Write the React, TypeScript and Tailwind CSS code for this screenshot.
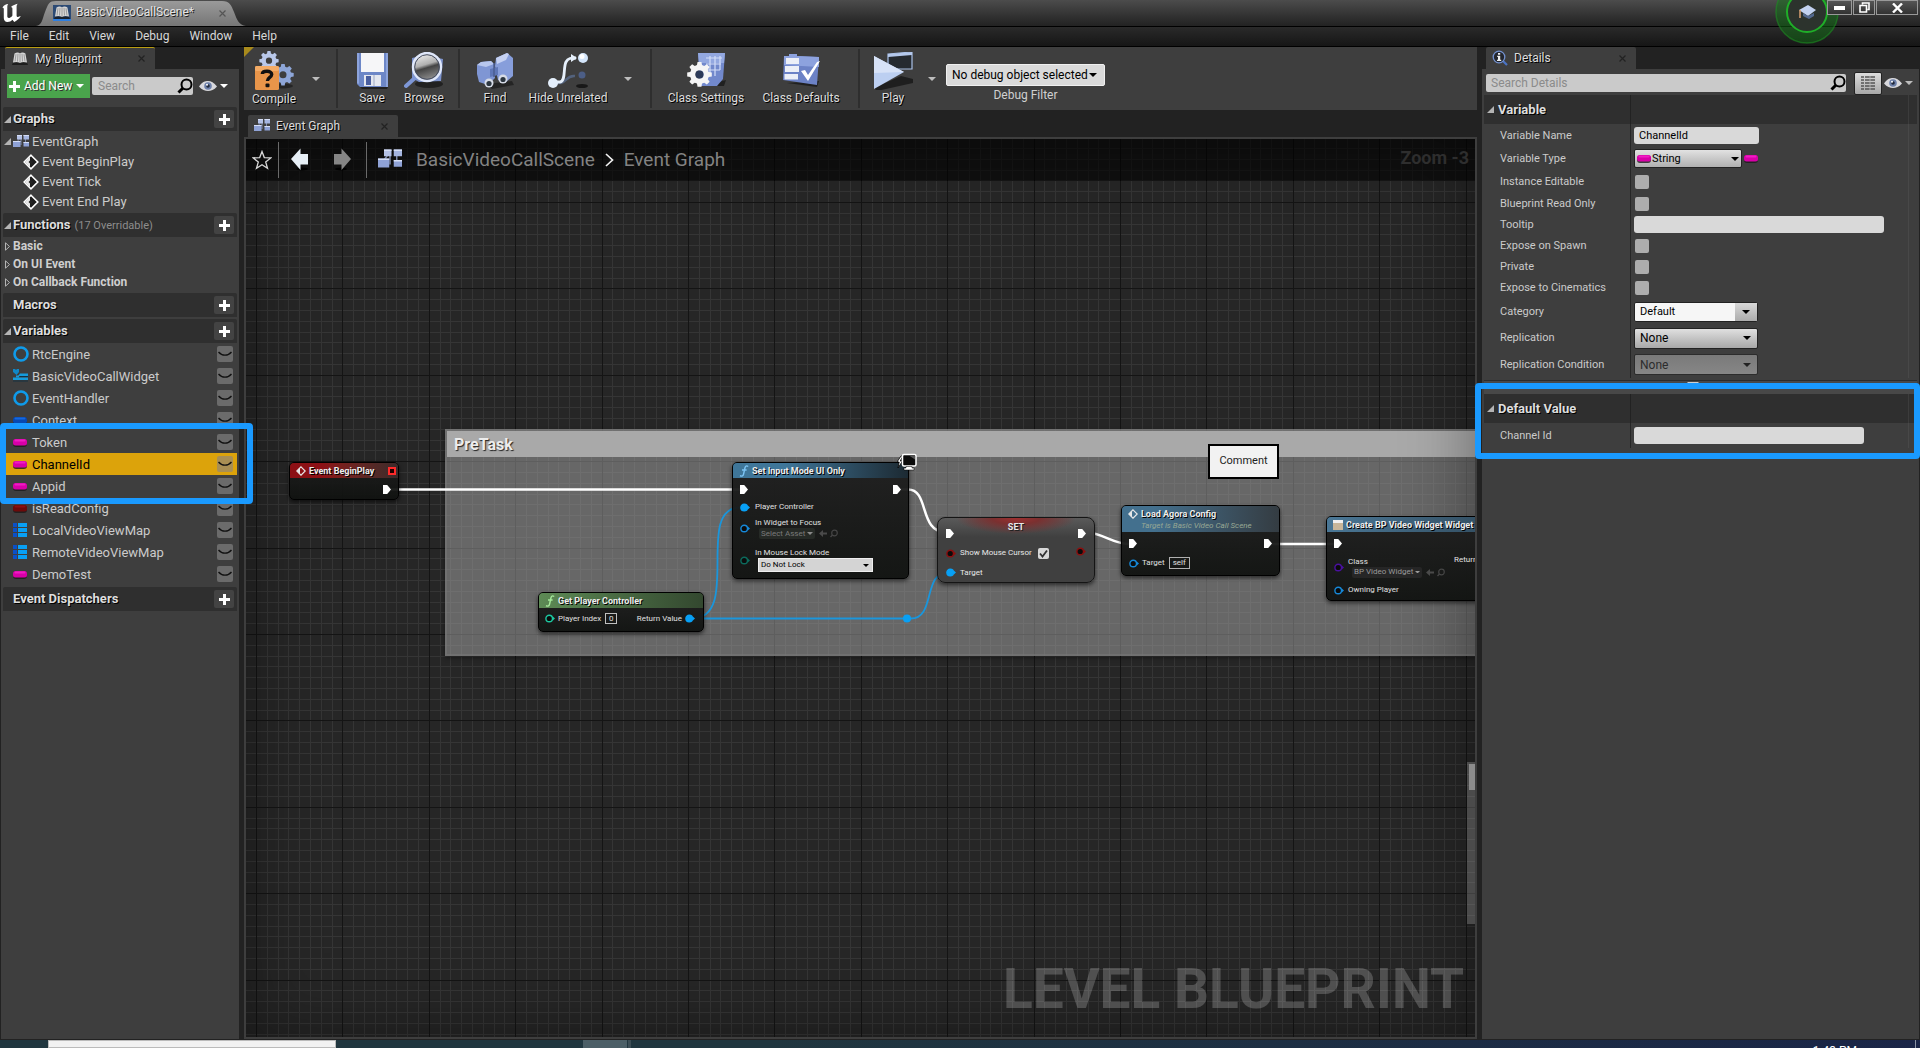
import React from "react";

type Children = { children?: React.ReactNode };

/* ---------- icons ---------- */

const UnrealLogo = () => (
  <svg width="20" height="20" viewBox="0 0 20 19" className="shrink-0" aria-hidden="true">
    <path
      fill="#fff"
      d="M.4 4.2C1.8 1.9 3.8.7 6.2.6 5.6 1.4 5.3 2.1 5.3 3.1v9.6c0 1.500 1.200 2 2.500 1.500 1.300-.5 2.200-1.300 2.600-2.200V5.200c0-1.100-.5-1.700-1.500-1.800C10.900 1.700 13.300 1 15.700.2c-.8.9-1.100 1.800-1.100 2.900v8.800c0 1.600 1.200 2 4.200.7-1.200 2.400-3.700 4.500-6.500 5.800l-1.900-2.200c-1.300 1.500-2.900 2.200-4.900 2.200-2.500 0-3.700-1.500-3.700-3.900V5.600C1.800 4.600 1.300 4.300.4 4.200z"
    />
  </svg>
);

const BookIcon = ({ blue = false }: { blue?: boolean }) => (
  <svg width="18" height="16" viewBox="0 0 18 16" className="shrink-0" aria-hidden="true">
    {blue && <rect width="18" height="16" fill="#2c4a74" />}
    {blue && <rect y="14" width="18" height="2" fill="#2f7fe0" />}
    <path d="M2 11.500 16 11.500 17 14 1 14z" fill="#111" opacity=".7" />
    <path d="M3.500 2.500C5.500 1.200 7.500 1.200 9 2.200c1.500-1 3.800-1 5.400.3L16 11.600c-2.400-.9-5-.9-7 .4-2-1.300-4.700-1.300-7-.4z" fill="#d7d7d7" />
    <path d="M5 3.200 4 10.500M7 2.800 6.500 10.500M9 2.500V12M11 2.800l.5 7.700M13 3.200l1 7.300" stroke="#8c8c8c" strokeWidth=".8" fill="none" />
  </svg>
);

const GraphIcon = ({ size = 16 }: { size?: number }) => (
  <svg width={size} height={size} viewBox="0 0 16 16" className="shrink-0" aria-hidden="true">
    <path d="M8 5v6M12.500 5v6M4 8l3-4" stroke="#7c88a8" strokeWidth="1" />
    <rect x="4" y="1" width="5" height="4.500" fill="#b4c1e6" />
    <rect x="10.500" y="1" width="5.500" height="4.500" fill="#a5b5e0" />
    <rect x="0" y="7" width="7.500" height="6" fill="#8fa2d6" />
    <rect x="10.500" y="8" width="5.500" height="4.500" fill="#8fa2d6" />
    <path d="M4 1h5v1H4zM10.500 1H16v1h-5.500zM0 7h7.500v1H0zM10.500 8H16v1h-5.500z" fill="#d5def6" />
  </svg>
);

const EventIcon = ({ size = 16 }: { size?: number }) => (
  <svg width={size} height={size} viewBox="0 0 16 16" className="shrink-0" aria-hidden="true">
    <path d="M8 1.200 14.800 8 8 14.800 1.200 8z" fill="#1c1c1c" stroke="#fff" strokeWidth="1.600" />
    <path d="M2 8 7 3v10z" fill="#e8e8e8" />
    <path d="M8 5.500 10.500 8 8 10.500 5.500 8z" fill="#222" />
  </svg>
);

const NodeEventIcon = () => (
  <svg width="10" height="10" viewBox="0 0 10 10" className="shrink-0" aria-hidden="true">
    <path d="M5 .8 9.200 5 5 9.200.8 5z" fill="none" stroke="#e8e8e8" strokeWidth="1.200" />
    <path d="M1.200 5 4 2.200v5.600z" fill="#e8e8e8" />
  </svg>
);

const Plus = ({ size = 11 }: { size?: number }) => (
  <svg width={size} height={size} viewBox="0 0 11 11" className="shrink-0" aria-hidden="true">
    <path d="M4 0h3v4h4v3H7v4H4V7H0V4h4z" fill="#fff" />
  </svg>
);

const Caret = ({ color = "#ddd", w = 8 }: { color?: string; w?: number }) => (
  <svg width={w} height={w / 2} viewBox="0 0 8 4" className="shrink-0" aria-hidden="true">
    <path d="M0 0h8L4 4z" fill={color} />
  </svg>
);

const CloseX = ({ color = "#222" }: { color?: string }) => (
  <svg width="7" height="7" viewBox="0 0 7 7" className="shrink-0" aria-hidden="true">
    <path d="M.5.5l6 6M6.500.5l-6 6" stroke={color} strokeWidth="1.200" />
  </svg>
);

const Expanded = () => (
  <svg width="7" height="7" viewBox="0 0 7 7" className="shrink-0" aria-hidden="true">
    <path d="M7 0v7H0z" fill="#b4b4b4" />
  </svg>
);

const Collapsed = () => (
  <svg width="5" height="9" viewBox="0 0 5 9" className="shrink-0" aria-hidden="true">
    <path d="M.5.800v7.400L4.500 4.500z" fill="none" stroke="#b4b4b4" strokeWidth="1" />
  </svg>
);

const Magnifier = () => (
  <svg width="16" height="16" viewBox="0 0 16 16" className="shrink-0" aria-hidden="true">
    <circle cx="9.500" cy="6.500" r="5" fill="none" stroke="#000" strokeWidth="2" />
    <path d="M6 10 1.500 14.500" stroke="#000" strokeWidth="3" />
  </svg>
);

const Eye = () => (
  <svg width="18" height="12" viewBox="0 0 18 12" className="shrink-0" aria-hidden="true">
    <path d="M0 6.500C3 2 6 1 9 1s6 1.500 9 5.500C15 10 12 11 9 11S3 10 0 6.500z" fill="#d8d8dc" />
    <circle cx="9" cy="6" r="3.800" fill="#6d80aa" />
    <circle cx="9" cy="6" r="1.800" fill="#20283c" />
    <circle cx="8" cy="4.800" r="1" fill="#fff" />
  </svg>
);

const Pill = ({ color, hi }: { color: string; hi: string }) => (
  <svg width="14" height="9" viewBox="0 0 14 9" className="shrink-0" aria-hidden="true">
    <rect x="0" y="2" width="14" height="7" rx="3" fill="#1c1c1c" opacity=".8" />
    <rect x="0" y="1" width="14" height="6.500" rx="2.500" fill={color} />
    <rect x="1.500" y="1.500" width="11" height="2" rx="1" fill={hi} />
  </svg>
);

const Ring = () => (
  <svg width="16" height="16" viewBox="0 0 16 16" className="shrink-0" aria-hidden="true">
    <circle cx="8" cy="8" r="6.500" fill="none" stroke="#0f9bea" strokeWidth="2.600" />
  </svg>
);

const WidgetIcon = () => (
  <svg width="16" height="14" viewBox="0 0 16 14" className="shrink-0" aria-hidden="true">
    <path d="M0 0h2l1 1 1-1h2v3L3.500 6 0 3z" fill="#1088c8" />
    <path d="M7 4.500h8v2.500H5zM0 8.500h15V11H0z" fill="#159bdc" />
    <path d="M3 6.500h3v2H3z" fill="#159bdc" />
    <path d="M7 7.500h8M0 12h15" stroke="#143040" strokeWidth="1" />
  </svg>
);

const MapIcon = () => (
  <svg width="14" height="14" viewBox="0 0 14 14" className="shrink-0" aria-hidden="true">
    <path d="M0 0h4v4H0zM0 5h4v4H0zM0 10h4v4H0z" fill="#0a50c8" />
    <path d="M5 0h9v4H5zM5 5h9v4H5zM5 10h9v4H5z" fill="#08a0f5" />
  </svg>
);

const DetailsIcon = () => (
  <svg width="16" height="16" viewBox="0 0 16 16" className="shrink-0" aria-hidden="true">
    <path d="M10.500 10.500 15 15" stroke="#4a73c4" strokeWidth="2.200" />
    <circle cx="7" cy="7" r="5.800" fill="#23262e" stroke="#7391cf" strokeWidth="1.300" />
    <path d="M6 3h2.200v1.800H6zM5.200 5.800h3v4h1V11H5V9.800h1V7h-.8z" fill="#f0f0f0" />
  </svg>
);

const gearPath =
  "M8.300 0h3.400l.5 2.700 1.900.8L16.400 2l2.400 2.400-1.600 2.300.8 1.900 2.700.5v3.400l-2.700.5-.8 1.900 1.600 2.300-2.400 2.400-2.300-1.600-1.900.8-.5 2.700H8.300l-.5-2.700-1.900-.8-2.300 1.600-2.400-2.400 1.600-2.300-.8-1.900L-.7 12.500V9.100L2 8.600l.8-1.900L1.200 4.400 3.600 2l2.300 1.500 1.900-.8zM10 7.300a3.500 3.500 0 1 0 0 7 3.500 3.500 0 0 0 0-7z";

const CompileIcon = () => (
  <svg width="40" height="40" viewBox="0 0 40 40" aria-hidden="true">
    <ellipse cx="28" cy="35" rx="11" ry="2.500" fill="#161616" opacity=".6" />
    <g transform="translate(6 0)"><path d={gearPath} fill="#b9c8ea" fillRule="evenodd" transform="scale(.9)" /></g>
    <g transform="translate(19 13)"><path d={gearPath} fill="#8ea6d8" fillRule="evenodd" /></g>
    <rect x="1" y="15" width="24" height="24" rx="1.500" fill="#e8954a" />
    <rect x="1" y="15" width="24" height="5" rx="1.500" fill="#f3ab66" />
    <path d="M8.300 23c.2-3.600 9.700-3.800 9.400.5-.1 2.800-4.300 3-4.300 6.500" fill="none" stroke="#111" strokeWidth="3.400" />
    <rect x="11.500" y="32.500" width="4" height="3.800" rx="1" fill="#111" />
  </svg>
);

const SaveIcon = () => (
  <svg width="36" height="38" viewBox="-2 0 36 38" aria-hidden="true">
    <path d="M4 35h28l3-6-4 8H6z" fill="#141414" opacity=".7" />
    <path d="M1 1h31v34H4l-3-3z" fill="#6d87c7" />
    <path d="M1 1h2v31l-2-1zM30 1h2v34h-2z" fill="#8da4dc" />
    <rect x="5" y="1" width="23" height="19" fill="#f6f6f8" />
    <rect x="8" y="23" width="17" height="11" fill="#e4e7ef" />
    <rect x="10" y="24" width="5" height="9" fill="#4a5fa0" />
    <rect x="17" y="23" width="2" height="11" fill="#c1c8da" />
  </svg>
);

const BrowseIcon = () => (
  <svg width="40" height="38" viewBox="0 0 40 38" aria-hidden="true">
    <defs>
      <linearGradient id="lens" x2=".3" y2="1">
        <stop offset="0" stopColor="#fff" />
        <stop offset=".5" stopColor="#b0b0b0" />
        <stop offset=".62" stopColor="#444" />
        <stop offset="1" stopColor="#888" />
      </linearGradient>
    </defs>
    <ellipse cx="25" cy="32" rx="14" ry="4" fill="#151515" opacity=".7" />
    <path d="M8 6 20 3l19 4-2 22-22 1L8 26z" fill="#7c92cb" />
    <path d="M12 25 2 34" stroke="#7e97d6" strokeWidth="4" strokeLinecap="round" />
    <circle cx="23" cy="15" r="14" fill="url(#lens)" stroke="#dfe7fa" strokeWidth="2.400" />
    <circle cx="23" cy="15" r="12.300" fill="none" stroke="#444c60" strokeWidth="1" />
  </svg>
);

const FindIcon = () => (
  <svg width="38" height="36" viewBox="0 0 38 36" aria-hidden="true">
    <path d="M10 31l26-3 2 4-22 4z" fill="#141414" opacity=".6" />
    <path d="M1 12 5 9l10-1 3 3 1 14-7 7-9-3-2-8z" fill="#7f96d4" />
    <path d="M20 5 31 0l6 5v18l-7 6-8-2-3-14z" fill="#879edb" />
    <path d="M1 12 5 9l10-1 3 3-8 3z" fill="#b8c7ee" />
    <path d="M20 5 31 0l2 1-3 6-9 4z" fill="#c5d1f2" />
    <path d="M14 16l8-2v8l-8 2z" fill="#5f77b8" />
    <path d="M18 10v14" stroke="#4a5c90" strokeWidth="1.500" />
    <circle cx="13" cy="30" r="4.500" fill="#d6dbe6" />
    <circle cx="13" cy="30.500" r="2.600" fill="#2c3640" />
    <circle cx="27" cy="26" r="4.500" fill="#d6dbe6" />
    <circle cx="27" cy="26.500" r="2.600" fill="#2c3640" />
  </svg>
);

const HideIcon = () => (
  <svg width="40" height="38" viewBox="0 0 40 38" aria-hidden="true">
    <ellipse cx="34" cy="34" rx="6" ry="2" fill="#181818" />
    <path d="M7 31h6c5-1 6-8 14-7" fill="none" stroke="#53627c" strokeWidth="2.500" />
    <circle cx="34" cy="23" r="3.500" fill="#4c5e86" />
    <path d="M6 30h6c6-1 3-14 6-20 2-4 5-4 10-4" fill="none" stroke="#e6f0fb" strokeWidth="2.800" />
    <path d="M23 2v8l6-4z" fill="#e6f0fb" />
    <circle cx="5" cy="31" r="5" fill="#e4effc" />
    <circle cx="35" cy="6" r="5" fill="#d4e6fb" />
    <circle cx="34" cy="4.500" r="2.500" fill="#fff" />
  </svg>
);

const ClassSettingsIcon = () => (
  <svg width="40" height="38" viewBox="0 0 40 38" aria-hidden="true">
    <path d="M18 34h20l2-6z" fill="#141414" opacity=".7" />
    <path d="M12 1h27l-2 26-6 7H14z" fill="#7289cc" />
    <path d="M12 1h27l-1 10H13z" fill="#93a8e0" />
    <path d="M20 6h16M20 12h15M20 18h14M24 4v20M29 4v20M34 4v14" stroke="#d3def8" strokeWidth="1.200" />
    <g transform="translate(2 10)">
      <path d={gearPath} fill="#f5f5f5" fillRule="evenodd" transform="scale(1.150)" />
      <circle cx="11.500" cy="12.400" r="4" fill="#2c3a58" />
    </g>
  </svg>
);

const ClassDefaultsIcon = () => (
  <svg width="40" height="36" viewBox="0 0 40 36" aria-hidden="true">
    <path d="M6 30 38 28l-2 6z" fill="#141414" opacity=".7" />
    <path d="M8 3V1h8v2l22 1-2 28L2 27 3 3z" fill="#6c82c6" />
    <path d="M8 3V1h8v2l22 1v10L3 12V3z" fill="#8da2de" />
    <path d="M5 5h13v6H5zM4 13h14v6H4zM3.500 21H17v5.500H3.500z" fill="#eceff7" />
    <path d="M20 18l4-1 3 5 9-13 3-1-12 20z" fill="#fff" />
  </svg>
);

const PlayIcon = () => (
  <svg width="40" height="38" viewBox="0 0 40 38" aria-hidden="true">
    <path d="M1 36 28 24l12 3v4L4 39z" fill="#161616" opacity=".8" />
    <path d="M15 2 39 0v17l-24 0z" fill="#252a30" stroke="#a9c0e6" strokeWidth="1.200" />
    <path d="M15 2 39 0v3l-24 2z" fill="#b4c8ec" />
    <path d="M1 4 31 20 1 37z" fill="#bccff1" />
    <path d="M1 4 31 20 1 21z" fill="#d7e2f7" />
  </svg>
);

const FunctionGlyph = ({ color }: { color: string }) => (
  <svg width="10" height="12" viewBox="0 0 10 12" className="shrink-0" aria-hidden="true">
    <path d="M9.200 1.500C7.500.3 6.300 1 5.900 3L4.600 9c-.4 2-1.600 2.700-3.600 1.700M3 5h4.600" fill="none" stroke={color} strokeWidth="1.400" />
  </svg>
);

const ExecPin = () => (
  <svg width="8" height="9" viewBox="0 0 8 9" className="shrink-0" aria-hidden="true">
    <path d="M0 0h4.200L8 4.500 4.200 9H0z" fill="#fff" />
  </svg>
);

const DataPin = ({ color, filled = false }: { color: string; filled?: boolean }) => (
  <svg width="10" height="9" viewBox="0 0 10 9" className="shrink-0" aria-hidden="true">
    <circle cx="4.200" cy="4.500" r="3.300" fill={filled ? color : "#0b0b0b"} stroke={color} strokeWidth="1.400" />
    <path d="M7.800 2.500 10 4.500 7.800 6.500z" fill={color} />
  </svg>
);

const AssetTools = () => (
  <svg width="20" height="9" viewBox="0 0 20 9" className="shrink-0" aria-hidden="true">
    <path d="M0 4.500 4 1v2.500h4v2H4V8z" fill="#4a4a4a" />
    <circle cx="15.500" cy="4" r="2.800" fill="none" stroke="#454545" strokeWidth="1.200" />
    <path d="M13.500 6 11.500 8" stroke="#454545" strokeWidth="1.500" />
  </svg>
);

/* ---------- shared pieces ---------- */

const SectionHeader = ({ title, note, arrow = true }: { title: string; note?: string; arrow?: boolean }) => (
  <div className="mx-0.5 flex h-6 items-center rounded-t-xs bg-[#2f2f2f] pr-[3px] pl-px">
    <span className="flex w-[9px]">{arrow && <Expanded />}</span>
    <h2 className="text-[13px] font-bold text-[#dedede] [text-shadow:1px_1px_0_#000]">{title}</h2>
    {note && <span className="ml-1 pt-0.5 text-[11px] text-[#8d8d8d]">{note}</span>}
    <button type="button" aria-label={"Add to " + title} className="ml-auto flex h-[18px] w-5 items-center justify-center rounded-xs bg-[#434343]">
      <Plus />
    </button>
  </div>
);

const VarRow = ({ name, icon, selected = false }: { name: string; icon: React.ReactNode; selected?: boolean }) => (
  <li className={selected ? "mx-0.5 flex h-[22px] items-center bg-[#dca30b] pr-1 text-black" : "mx-0.5 flex h-[22px] items-center pr-1 text-[#cbcbcb]"}>
    <span className="ml-2.5 flex w-[19px] items-center">{icon}</span>
    <span className="pt-0.5 text-[13px]">{name}</span>
    <button
      type="button"
      aria-label={"Toggle visibility of " + name}
      className={selected ? "ml-auto flex size-4 items-center justify-center rounded-xs bg-[#a98f54]" : "ml-auto flex size-4 items-center justify-center rounded-xs bg-[#6b6b6b]"}
    >
      <svg width="14" height="6" viewBox="0 0 14 6" aria-hidden="true">
        <path d="M.5 1C4 5.200 10 5.200 13.500 1" fill="none" stroke="#111" strokeWidth="1.400" />
      </svg>
    </button>
  </li>
);

const pink = <Pill color="#d800a8" hi="#f01cc4" />;

const DockTab = ({ icon, title, accent = false }: { icon: React.ReactNode; title: string; accent?: boolean }) => (
  <div className={accent ? "flex h-full w-[150px] items-center rounded-t-xs border-t border-[#b99d12] bg-[#3e3e3e] px-1.5" : "flex h-full w-[150px] items-center rounded-t-xs bg-[#3e3e3e] px-1.5"}>
    {icon}
    <span className="ml-1.5 text-xs text-[#dcdcdc] [text-shadow:1px_1px_0_#000]">{title}</span>
    <button type="button" aria-label={"Close " + title} className="mr-0.5 ml-auto p-0.5">
      <CloseX />
    </button>
  </div>
);

/* ---------- left panel ---------- */

const MyBlueprint = () => (
  <aside className="z-20 ml-px flex w-[238px] shrink-0 flex-col">
    <div className="flex h-[22px] pl-1">
      <DockTab icon={<BookIcon />} title="My Blueprint" accent />
    </div>
    <div className="flex-1 bg-[#3e3e3e]">
      <div className="flex h-[38px] items-center gap-0.5 pr-2 pb-1 pl-1.5">
        <button type="button" className="flex h-6 w-[83px] items-center gap-1 bg-[#4aa44c] px-0.5 text-xs whitespace-nowrap text-white [text-shadow:1px_1px_0_#333]">
          <Plus />
          Add New
          <Caret color="#fff" />
        </button>
        <div className="flex h-[18px] w-[101px] items-center rounded-xs bg-[#cacaca] pl-1.5">
          <input type="text" aria-label="Search blueprint" placeholder="Search" className="w-full min-w-0 bg-transparent text-xs text-black placeholder-[#8b8b8b] outline-none" />
          <Magnifier />
        </div>
        <button type="button" aria-label="View options" className="ml-1 flex items-center gap-[3px]">
          <Eye />
          <Caret color="#fff" />
        </button>
      </div>

      <SectionHeader title="Graphs" />
      <ul className="text-[13px] text-[#cbcbcb]">
        <li className="flex h-[21px] items-center pl-[3px]">
          <Expanded />
          <span className="mr-[3px] ml-0.5 flex"><GraphIcon /></span>
          EventGraph
        </li>
        {["Event BeginPlay", "Event Tick", "Event End Play"].map((e) => (
          <li key={e} className="flex h-5 items-center gap-[3px] pl-[22px]">
            <EventIcon />
            {e}
          </li>
        ))}
      </ul>

      <div className="mt-px">
        <SectionHeader title="Functions" note="(17 Overridable)" />
      </div>
      <ul className="text-xs font-bold text-[#cfcfcf]">
        {["Basic", "On UI Event", "On Callback Function"].map((f) => (
          <li key={f} className="flex h-[18px] items-center gap-[3px] pl-1">
            <Collapsed />
            {f}
          </li>
        ))}
      </ul>

      <div className="mt-0.5 flex flex-col gap-0.5">
        <SectionHeader title="Macros" arrow={false} />
        <SectionHeader title="Variables" />
      </div>
      <ul>
        <VarRow name="RtcEngine" icon={<Ring />} />
        <VarRow name="BasicVideoCallWidget" icon={<WidgetIcon />} />
        <VarRow name="EventHandler" icon={<Ring />} />
        <VarRow name="Context" icon={<Pill color="#0848b0" hi="#1468e0" />} />
      </ul>
      <div className="relative">
        <ul>
          <VarRow name="Token" icon={pink} />
          <VarRow name="ChannelId" icon={pink} selected />
          <VarRow name="Appid" icon={pink} />
        </ul>
        <div className="pointer-events-none absolute -top-2 -right-3.5 -bottom-[7px] -left-px rounded-sm border-[6px] border-[#1a9aff]" />
      </div>
      <ul>
        <VarRow name="isReadConfig" icon={<Pill color="#6d0a0a" hi="#8c1010" />} />
        <VarRow name="LocalVideoViewMap" icon={<MapIcon />} />
        <VarRow name="RemoteVideoViewMap" icon={<MapIcon />} />
        <VarRow name="DemoTest" icon={pink} />
      </ul>
      <div className="mt-0.5">
        <SectionHeader title="Event Dispatchers" arrow={false} />
      </div>
    </div>
  </aside>
);

/* ---------- toolbar ---------- */

const Tool = ({ label, width, children }: { label: string; width: string } & Children) => (
  <button type="button" className={"flex shrink-0 flex-col items-center justify-between pt-1 pb-1 " + width}>
    <span className="flex h-10 items-center">{children}</span>
    <span className="text-xs leading-4 whitespace-nowrap text-[#dcdcdc] [text-shadow:1px_1px_0_#000]">{label}</span>
  </button>
);

const ToolMenu = ({ label, width }: { label: string; width: string }) => (
  <button type="button" aria-label={label} className={"flex shrink-0 items-center justify-center " + width}>
    <Caret color="#bdbdbd" />
  </button>
);

const Sep = () => <div className="mx-2 my-0.5 w-0.5 shrink-0 bg-[#2e2e2e]" />;

const Toolbar = () => (
  <div className="relative flex h-[63px] bg-[#3e3e3e]">
    <div className="absolute top-0 left-0 size-2.5 bg-[#a88a1c] [clip-path:polygon(0_0,100%_0,0_100%)]" />
    <Tool label="Compile" width="w-[60px]"><CompileIcon /></Tool>
    <ToolMenu label="Compile options" width="w-6" />
    <Sep />
    <Tool label="Save" width="w-[52px]"><SaveIcon /></Tool>
    <Tool label="Browse" width="w-[52px]"><BrowseIcon /></Tool>
    <Sep />
    <Tool label="Find" width="w-[54px]"><FindIcon /></Tool>
    <Tool label="Hide Unrelated" width="w-[92px]"><HideIcon /></Tool>
    <ToolMenu label="Hide unrelated options" width="w-7" />
    <Sep />
    <Tool label="Class Settings" width="w-[92px]"><ClassSettingsIcon /></Tool>
    <Tool label="Class Defaults" width="w-[98px]"><ClassDefaultsIcon /></Tool>
    <Sep />
    <Tool label="Play" width="w-[50px]"><PlayIcon /></Tool>
    <ToolMenu label="Play options" width="w-7" />
    <div className="flex flex-col items-center pt-[17px]">
      <div className="relative flex items-center">
        <select id="debug-object" className="h-[22px] w-[159px] appearance-none rounded-xs border border-[#f0f0f0] bg-[#dadada] pl-[5px] text-xs text-black">
          <option>No debug object selected</option>
        </select>
        <span className="pointer-events-none absolute right-2 flex"><Caret color="#000" /></span>
      </div>
      <label htmlFor="debug-object" className="pt-px text-xs leading-4 text-[#d0d0d0]">Debug Filter</label>
    </div>
  </div>
);

/* ---------- graph ---------- */

const TILE = 432;
const minorLines = Array.from({ length: 40 }, (_, i) => i).filter((i) => i % 8 !== 0).map((i) => Math.round((i * TILE) / 40));
const majorLines = Array.from({ length: 5 }, (_, i) => Math.round((i * TILE) / 5));

const Grid = () => (
  <svg className="absolute inset-0 size-full" aria-hidden="true">
    <defs>
      <pattern id="grid" x="10" y="63" width={TILE} height={TILE} patternUnits="userSpaceOnUse">
        {minorLines.map((p) => (
          <React.Fragment key={p}>
            <rect x={p} y="0" width="1" height={TILE} fill="#353535" />
            <rect x="0" y={p} width={TILE} height="1" fill="#353535" />
          </React.Fragment>
        ))}
        {majorLines.map((p) => (
          <React.Fragment key={p}>
            <rect x={p} y="0" width="1" height={TILE} fill="#141414" />
            <rect x="0" y={p} width={TILE} height="1" fill="#141414" />
          </React.Fragment>
        ))}
      </pattern>
    </defs>
    <rect width="100%" height="100%" fill="#262626" />
    <rect width="100%" height="100%" fill="url(#grid)" />
  </svg>
);

const Wires = () => (
  <svg className="absolute inset-0 size-full" fill="none" aria-hidden="true">
    <g stroke="#fff" strokeWidth="2.500">
      <path d="M145 350.500H494" />
      <path d="M655 350.500H662C684 350.500 672 393.500 701 393.500" />
      <path d="M840 393.500C858 394 866 405 884 405" />
      <path d="M1025 405H1088" />
    </g>
    <g stroke="#1a96dc" strokeWidth="1.800">
      <path d="M446 479.500C496 479.500 448 368.500 494 368.500" />
      <path d="M446 479.500H665C690 479.500 676 433 703 433" />
    </g>
    <circle cx="661" cy="479.500" r="4" fill="#08a0f5" />
  </svg>
);

const nodeBase = "absolute overflow-hidden rounded-[5px] border border-black bg-linear-to-b from-[#1e1e1e]/95 to-[#101210]/95 text-[8px] leading-[10px] text-[#e0e0e0] shadow-[0_2px_4px_rgba(0,0,0,0.6)] ";
const titleBase = "flex h-[15px] items-center gap-[3px] px-1.5 text-[9px] font-bold whitespace-nowrap text-[#ededed] [text-shadow:1px_1px_0_#000] ";

const EventBeginPlayNode = () => (
  <div className={nodeBase + "top-[323px] left-[43px] h-[38px] w-[110px]"}>
    <div className={titleBase + "bg-linear-to-r from-[#8c1015] from-30% to-[#3a2a2a]"}>
      <NodeEventIcon />
      Event BeginPlay
      <span className="-mr-1 ml-auto size-2 border-2 border-[#ff2a2a] bg-[#200]" />
    </div>
    <div className="flex h-[22px] items-center justify-end pr-[7px]"><ExecPin /></div>
  </div>
);

const GetPlayerNode = () => (
  <div className={nodeBase + "top-[453px] left-[292px] h-10 w-[166px]"}>
    <div className={titleBase + "bg-linear-to-r from-[#5d8a55] to-[#33482f]"}>
      <FunctionGlyph color="#a6e89a" />
      Get Player Controller
    </div>
    <div className="flex h-[21px] items-center pr-2 pl-1.5">
      <DataPin color="#1cc8a0" />
      <label htmlFor="player-index" className="ml-[3px]">Player Index</label>
      <input id="player-index" type="text" defaultValue="0" className="ml-1 h-[11px] w-3 border border-[#c0c0c0] bg-transparent text-center text-[8px] outline-none" />
      <span className="mr-[3px] ml-auto">Return Value</span>
      <DataPin color="#08a0f5" filled />
    </div>
  </div>
);

const SetInputNode = () => (
  <div className={nodeBase + "top-[323px] left-[486px] h-[117px] w-[177px]"}>
    <div className={titleBase + "bg-linear-to-r from-[#3f7699] from-30% to-[#1c2a33]"}>
      <FunctionGlyph color="#7cc4f4" />
      Set Input Mode UI Only
    </div>
    <div className="flex h-[22px] items-center justify-between px-[7px]"><ExecPin /><ExecPin /></div>
    <div className="flex h-[14px] items-center gap-[5px] pl-[7px]"><DataPin color="#08a0f5" filled />Player Controller</div>
    <div className="flex h-[29px] items-center gap-[5px] pl-[7px]">
      <DataPin color="#1688d8" />
      <div className="flex flex-col">
        <span>In Widget to Focus</span>
        <div className="ml-1 flex items-center gap-1 text-[#7a7a7a]">
          <button type="button" className="flex h-[11px] items-center gap-0.5 rounded-xs bg-[#262a26] px-0.5">Select Asset <Caret color="#8a8a8a" w={6} /></button>
          <AssetTools />
        </div>
      </div>
    </div>
    <div className="mt-1 flex h-[26px] items-center gap-[5px] pl-[7px]">
      <DataPin color="#0c6a5c" />
      <div className="flex flex-col">
        <label htmlFor="lock-mode">In Mouse Lock Mode</label>
        <div className="relative ml-[3px] flex items-center">
          <select id="lock-mode" className="h-[14px] w-[115px] appearance-none border border-[#eee] bg-[#d4d4d4] pl-0.5 text-[8px] leading-[10px] text-black">
            <option>Do Not Lock</option>
          </select>
          <span className="pointer-events-none absolute right-1 flex"><Caret color="#000" w={6} /></span>
        </div>
      </div>
    </div>
  </div>
);

const SetNode = () => (
  <div className="absolute top-[378px] left-[691px] h-[66px] w-[158px] overflow-hidden rounded-lg border border-[#151515] bg-linear-to-b from-[#5a5a5a] to-[#404040] to-30% text-[8px] leading-[10px] text-[#e8e8e8] shadow-[0_2px_4px_rgba(0,0,0,0.6)]">
    <div className="grid h-[25px] grid-cols-[1fr_auto_1fr] bg-[radial-gradient(ellipse_60px_16px_at_top,#a03030_0%,#7a3030_40%,transparent_100%)] px-2">
      <span className="self-end pb-[5px]"><ExecPin /></span>
      <span className="pt-1 text-[9px] font-bold [text-shadow:1px_1px_0_#222]">SET</span>
      <span className="self-end justify-self-end pb-[5px]"><ExecPin /></span>
    </div>
    <div className="flex h-5 items-center px-2">
      <DataPin color="#8c0f0f" />
      <label htmlFor="show-cursor" className="ml-1">Show Mouse Cursor</label>
      <span className="relative ml-1.5 flex">
        <input id="show-cursor" type="checkbox" defaultChecked className="size-[11px] appearance-none rounded-xs bg-[#d8d8d8]" />
        <svg width="9" height="9" viewBox="0 0 9 9" className="pointer-events-none absolute top-px left-px" aria-hidden="true">
          <path d="M1 4.500 3.500 7.500 8 1.500" fill="none" stroke="#333" strokeWidth="1.800" />
        </svg>
      </span>
      <span className="ml-auto pb-1"><DataPin color="#8c0f0f" /></span>
    </div>
    <div className="flex h-[19px] items-center gap-1 pl-2"><DataPin color="#08a0f5" filled />Target</div>
  </div>
);

const LoadConfigNode = () => (
  <div className={nodeBase + "top-[366px] left-[875px] h-[71px] w-[159px]"}>
    <div className="h-[26px] bg-linear-to-r from-[#43708e] from-20% to-[#343c42]">
      <div className={titleBase}><NodeEventIcon />Load Agora Config</div>
      <div className="pl-[19px] leading-[9px] whitespace-nowrap text-[#98a894] italic">Target is Basic Video Call Scene</div>
    </div>
    <div className="flex h-[23px] items-center justify-between px-[7px]"><ExecPin /><ExecPin /></div>
    <div className="flex h-4 items-center pl-[7px]">
      <DataPin color="#1688d8" />
      <span className="ml-[3px]">Target</span>
      <button type="button" className="ml-1 border border-[#b0b0b0] px-[3px]">self</button>
    </div>
  </div>
);

const CreateWidgetNode = () => (
  <div className={nodeBase + "top-[377px] left-[1080px] h-[85px] w-[220px]"}>
    <div className={titleBase + "bg-linear-to-r from-[#4a7796] to-[#2b4150]"}>
      <svg width="10" height="10" viewBox="0 0 10 10" className="shrink-0" aria-hidden="true">
        <rect width="10" height="10" fill="#c8b69a" />
        <rect width="10" height="3" fill="#f0f0f0" />
      </svg>
      Create BP Video Widget Widget
    </div>
    <div className="flex h-[23px] items-center pl-[7px]"><ExecPin /></div>
    <div className="flex h-6 items-center pl-[7px]">
      <DataPin color="#4a10a0" />
      <div className="ml-1 flex w-[106px] flex-col">
        <span>Class</span>
        <div className="ml-1 flex items-center gap-1 text-[#9a9a9a]">
          <button type="button" className="flex h-[11px] items-center gap-0.5 rounded-xs bg-[#262626] px-0.5 whitespace-nowrap">BP Video Widget <Caret color="#9a9a9a" w={5} /></button>
          <AssetTools />
        </div>
      </div>
      <span className="self-start whitespace-nowrap">Return Value</span>
    </div>
    <div className="flex h-[22px] items-center gap-1 pl-[7px]"><DataPin color="#1688d8" />Owning Player</div>
  </div>
);

const GraphCanvas = () => (
  <div className="relative flex-1 overflow-hidden border-2 border-[#3e3e3e] font-[Roboto,sans-serif]">
    <Grid />
    <section className="absolute top-[290px] -right-10 left-[199px] h-[227px] border-2 border-[#777]/60 bg-[#a8a8a8]/50 shadow-[0_2px_4px_rgba(0,0,0,0.4)]">
      <h3 className="h-[26px] bg-[#a9a9a9] pt-px pl-[7px] text-base leading-[26px] font-bold text-[#ededed] [text-shadow:1px_1px_1px_#222]">PreTask</h3>
    </section>
    <div className="pointer-events-none absolute inset-0 shadow-[inset_0_0_70px_rgba(0,0,0,0.4)]" />
    <Wires />
    <EventBeginPlayNode />
    <GetPlayerNode />
    <SetInputNode />
    <SetNode />
    <LoadConfigNode />
    <CreateWidgetNode />
    <svg width="20" height="18" viewBox="0 0 20 18" className="absolute top-[314px] left-[651px]" aria-hidden="true">
      <path d="M4 3 0 9h2.200L1 15l4.500-7H3.200L6 3z" fill="#fff" stroke="#000" strokeWidth=".8" />
      <rect x="5.500" y="1.500" width="13.500" height="11.500" rx="1.500" fill="#0a0a0a" stroke="#fff" strokeWidth="1.500" />
      <path d="M9 13.500h6v1.500h2V17H7v-2h2z" fill="#fff" stroke="#000" strokeWidth=".5" />
      <path d="M12 2.500h6v4z" fill="#555" />
    </svg>
    <div className="absolute top-[305px] left-[962px] flex h-[35px] w-[71px] items-center justify-center border-2 border-black bg-[#f2f2f2] text-[11px] text-[#222]">Comment</div>

    <nav aria-label="Breadcrumb" className="absolute inset-x-0 top-0 flex h-[42px] items-center bg-black/60 pl-1.5">
      <button type="button" aria-label="Favourite">
        <svg width="20" height="20" viewBox="0 0 20 20" aria-hidden="true">
          <path d="M10 1.500 12.300 7.600 18.800 7.900 13.700 12 15.500 18.300 10 14.700 4.500 18.300 6.300 12 1.200 7.900 7.700 7.600z" fill="none" stroke="#d8d8d8" strokeWidth="1.300" />
        </svg>
      </button>
      <span className="mr-3 ml-1.5 h-9 w-px bg-[#6a6a6a]" />
      <button type="button" aria-label="Back">
        <svg width="18" height="24" viewBox="0 0 18 24" aria-hidden="true">
          <ellipse cx="11" cy="21" rx="6" ry="1.500" fill="#000" />
          <path d="M0 11 9.500.5V6H17v10.500H9.500V22z" fill="#e6eef5" />
        </svg>
      </button>
      <button type="button" aria-label="Forward" className="ml-6">
        <svg width="18" height="24" viewBox="0 0 18 24" aria-hidden="true">
          <ellipse cx="8" cy="21" rx="6" ry="1.500" fill="#000" />
          <path d="M18 11 8.500.5V6H1v10.500h7.500V22z" fill="#858585" />
        </svg>
      </button>
      <span className="mr-[11px] ml-[15px] h-9 w-px bg-[#6a6a6a]" />
      <GraphIcon size={24} />
      <a href="#scene" className="ml-3.5 text-[19px] text-[#838383]">BasicVideoCallScene</a>
      <svg width="9" height="14" viewBox="0 0 9 14" className="mx-2.5" aria-hidden="true">
        <path d="M1 1l6.500 6L1 13" fill="none" stroke="#f0f0f0" strokeWidth="1.700" />
      </svg>
      <span className="text-[19px] text-[#838383]">Event Graph</span>
      <span className="mr-1.5 ml-auto pb-1.5 text-[18px] font-bold text-[#2e2e2e]">Zoom -3</span>
    </nav>

    <div className="pointer-events-none absolute right-[11px] bottom-5 text-[55px] leading-none font-bold whitespace-nowrap text-white/20">LEVEL BLUEPRINT</div>
    <div className="absolute right-0 bottom-[113px] h-[162px] w-2 bg-white/20 pt-0.5 pl-0.5">
      <div className="h-[26px] bg-[#8c8c8c]" />
    </div>
  </div>
);

/* ---------- details ---------- */

const DetailRow = ({ label, id, height, children }: { label: string; id: string; height: string } & Children) => (
  <div className={"grid grid-cols-[146px_1fr] " + height}>
    <label htmlFor={id} className="flex items-center pt-px pl-4 text-[11px] whitespace-nowrap text-[#cbcbcb]">{label}</label>
    <div className="mr-2 flex items-center border-r border-l border-r-[#484848] border-l-[#262626] pl-[3px]">{children}</div>
  </div>
);

const DetailHeader = ({ title }: { title: string }) => (
  <div className="grid h-[29px] grid-cols-[146px_1fr] bg-[#2f2f2f]">
    <div className="flex items-center gap-1 pl-[3px]">
      <Expanded />
      <h2 className="text-[13px] font-bold text-[#dedede] [text-shadow:1px_1px_0_#000]">{title}</h2>
    </div>
    <div className="mr-2 border-r border-l border-r-[#3c3c3c] border-l-[#222]" />
  </div>
);

const checkCls = "ml-px size-3.5 appearance-none rounded-xs bg-[#adadad]";
const fieldCls = "h-[17px] rounded-[3px] bg-[#d9d9d9] px-[5px] text-[11px] text-black outline-none ";

const Details = () => (
  <aside className="z-20 mr-px flex w-[437px] shrink-0 flex-col">
    <div className="flex h-[22px] pl-1">
      <DockTab icon={<DetailsIcon />} title="Details" />
    </div>
    <div className="flex-1 bg-[#3e3e3e] pr-0.5 pl-0.5">
      <div className="flex h-[26px] items-center pl-0.5">
        <div className="mt-0.5 flex h-[18px] flex-1 items-center rounded-xs bg-[#cacaca] pl-[5px]">
          <input type="text" aria-label="Search details" placeholder="Search Details" className="w-full min-w-0 bg-transparent text-xs text-black placeholder-[#8b8b8b] outline-none" />
          <Magnifier />
        </div>
        <button type="button" aria-label="Property matrix" className="mt-0.5 ml-2 flex h-[23px] w-7 items-center justify-center rounded-xs border border-[#222] bg-linear-to-b from-[#dcdcdc] to-[#a8a8a8]">
          <svg width="14" height="15" viewBox="0 0 14 15" aria-hidden="true">
            <path d="M0 1h3M4 1h10M0 4h3M4 4h10M0 7h3M4 7h10M0 10h3M4 10h10M0 13h3M4 13h10" stroke="#555" strokeWidth="1.600" />
            <path d="M9 0v15" stroke="#bbb" strokeWidth=".8" />
          </svg>
        </button>
        <button type="button" aria-label="View options" className="mt-0.5 mr-1 ml-0.5 flex items-center gap-[3px]">
          <Eye />
          <Caret color="#bdbdbd" />
        </button>
      </div>

      <DetailHeader title="Variable" />
      <DetailRow label="Variable Name" id="var-name" height="h-[23px]">
        <input id="var-name" type="text" defaultValue="ChannelId" className={fieldCls + "w-[125px]"} />
      </DetailRow>
      <DetailRow label="Variable Type" id="var-type" height="h-[23px]">
        <div className="relative flex items-center">
          <select id="var-type" className="h-[19px] w-[108px] appearance-none rounded-xs border border-[#222] bg-linear-to-b from-[#e2e2e2] to-[#b0b0b0] pl-[17px] text-[11px] leading-4 text-black">
            <option>String</option>
          </select>
          <span className="pointer-events-none absolute left-[3px] flex">{pink}</span>
          <span className="pointer-events-none absolute right-[3px] flex"><Caret color="#000" /></span>
        </div>
        <span className="ml-0.5 flex">{pink}</span>
      </DetailRow>
      <DetailRow label="Instance Editable" id="editable" height="h-[23px]"><input id="editable" type="checkbox" className={checkCls} /></DetailRow>
      <DetailRow label="Blueprint Read Only" id="readonly" height="h-[21px]"><input id="readonly" type="checkbox" className={checkCls} /></DetailRow>
      <DetailRow label="Tooltip" id="tooltip" height="h-[21px]"><input id="tooltip" type="text" className={fieldCls + "w-[250px]"} /></DetailRow>
      <DetailRow label="Expose on Spawn" id="spawn" height="h-[21px]"><input id="spawn" type="checkbox" className={checkCls} /></DetailRow>
      <DetailRow label="Private" id="private" height="h-[21px]"><input id="private" type="checkbox" className={checkCls} /></DetailRow>
      <DetailRow label="Expose to Cinematics" id="cinematics" height="h-[21px]"><input id="cinematics" type="checkbox" className={checkCls} /></DetailRow>
      <DetailRow label="Category" id="category" height="h-[27px]">
        <div className="relative flex items-center">
          <select id="category" className="h-5 w-[124px] appearance-none rounded-xs border border-[#222] bg-[#f6f6f6] pl-[5px] text-[11px] leading-4 text-black">
            <option>Default</option>
          </select>
          <span className="pointer-events-none absolute right-px flex h-[18px] w-[22px] items-center justify-center bg-linear-to-b from-[#d8d8d8] to-[#acacac]"><Caret color="#000" /></span>
        </div>
      </DetailRow>
      <DetailRow label="Replication" id="replication" height="h-[26px]">
        <div className="relative flex items-center">
          <select id="replication" className="h-[21px] w-[124px] appearance-none rounded-xs border border-[#222] bg-linear-to-b from-[#e0e0e0] to-[#a8a8a8] pl-[5px] text-xs text-black">
            <option>None</option>
          </select>
          <span className="pointer-events-none absolute right-[7px] flex"><Caret color="#000" /></span>
        </div>
      </DetailRow>
      <DetailRow label="Replication Condition" id="condition" height="h-[27px]">
        <div className="relative flex items-center">
          <select id="condition" disabled className="h-[21px] w-[124px] appearance-none rounded-xs border border-[#2c2c2c] bg-linear-to-b from-[#7a7a7a] to-[#868686] pl-[5px] text-xs text-[#2c2c2c] opacity-100">
            <option>None</option>
          </select>
          <span className="pointer-events-none absolute right-[7px] flex"><Caret color="#222" /></span>
        </div>
      </DetailRow>
      <div className="mt-0.5 flex h-3.5 items-start justify-center border-t border-[#2c2c2c] bg-[#484848] pt-px pr-[15px]">
        <Caret color="#d0d0d0" w={12} />
      </div>
      <section className="relative pb-[5px]">
        <DetailHeader title="Default Value" />
        <DetailRow label="Channel Id" id="channel-id" height="h-[25px]">
          <input id="channel-id" type="text" className={fieldCls + "w-[230px]"} />
        </DetailRow>
        <div className="pointer-events-none absolute -top-[11px] -right-[3px] -bottom-1.5 -left-[9px] rounded-sm border-[6px] border-[#1a9aff]" />
      </section>
    </div>
  </aside>
);

/* ---------- window chrome ---------- */

const TitleBar = () => (
  <header className="relative z-30 flex h-[26px] bg-linear-to-b from-[#4c4c4c] to-[#222]">
    <div className="flex w-9 items-center pl-0.5"><UnrealLogo /></div>
    <div className="relative flex w-[210px] items-center pr-5 pl-[17px]">
      <svg className="absolute inset-0 size-full" viewBox="0 0 210 26" preserveAspectRatio="none" aria-hidden="true">
        <defs>
          <linearGradient id="tab" x2="0" y2="1">
            <stop offset="0" stopColor="#9a9a9a" />
            <stop offset="1" stopColor="#767676" />
          </linearGradient>
        </defs>
        <path d="M0 26C6 25 6 20 9 12 12 4 13 1 20 1H186c8 0 9 4 12 11 3 8 5 13 12 14z" fill="url(#tab)" />
      </svg>
      <span className="relative flex"><BookIcon blue /></span>
      <span className="relative ml-[5px] pb-0.5 text-xs text-[#e4e4e4] [text-shadow:1px_1px_0_#222]">BasicVideoCallScene*</span>
      <button type="button" aria-label="Close tab" className="relative ml-auto"><CloseX color="#555" /></button>
    </div>
    <div className="relative ml-auto flex">
      <svg width="64" height="46" viewBox="0 0 64 46" className="absolute top-0 -left-[52px]" aria-hidden="true">
        <circle cx="32" cy="12" r="31" fill="#0f7a14" fillOpacity=".45" />
        <circle cx="32" cy="12" r="31" fill="none" stroke="#1c8c22" strokeWidth="1.500" strokeOpacity=".6" />
        <circle cx="32" cy="12" r="20" fill="#2c332d" stroke="#1fae28" strokeWidth="2" />
        <path d="M24 10 33 5l8 5-8 6z" fill="#c2d2f0" />
        <path d="M28 13l5 3 6-3v3l-5 3-6-3z" fill="#53698f" />
        <path d="M25 10v8" stroke="#d8a070" strokeWidth="1.500" />
      </svg>
      <div className="relative flex h-[15px] gap-px pr-0.5">
        <button type="button" aria-label="Minimize" className="flex w-[25px] items-center justify-center border border-[#999] bg-linear-to-b from-[#555] to-[#333]">
          <svg width="11" height="4" viewBox="0 0 11 4" aria-hidden="true"><rect width="11" height="4" fill="#fff" /></svg>
        </button>
        <button type="button" aria-label="Restore" className="flex w-[22px] items-center justify-center border border-[#999] bg-linear-to-b from-[#555] to-[#333]">
          <svg width="11" height="11" viewBox="0 0 11 11" aria-hidden="true">
            <path d="M3.500 2.500V1h6.500v6.500H8.500M1 3.500h6.500V10H1z" fill="none" stroke="#fff" strokeWidth="1.600" />
          </svg>
        </button>
        <button type="button" aria-label="Close" className="flex w-[42px] items-center justify-center border border-[#999] bg-linear-to-b from-[#555] to-[#333]">
          <svg width="11" height="10" viewBox="0 0 11 10" aria-hidden="true"><path d="M1 .500l9 9M10 .500l-9 9" stroke="#fff" strokeWidth="2.400" /></svg>
        </button>
      </div>
    </div>
  </header>
);

const MenuBar = () => (
  <nav aria-label="Menu" className="flex h-[21px] shrink-0 items-center gap-5 border-y border-black bg-linear-to-b from-[#2a2a2a] to-[#161616] pb-0.5 pl-2.5 text-xs text-[#d8d8d8]">
    {["File", "Edit", "View", "Debug", "Window", "Help"].map((m) => (
      <button key={m} type="button">{m}</button>
    ))}
  </nav>
);

const TaskBar = () => (
  <footer className="flex h-2 shrink-0 overflow-hidden bg-linear-to-r from-[#20363f] from-40% to-[#1a2547]">
    <div className="ml-12 w-72 border border-[#bbb] bg-[#f2f2f2]" />
    <div className="ml-[247px] w-11 bg-[#4c5f67]" />
    <div className="ml-px w-[3px] bg-[#3c4d55]" />
    <span className="mr-[58px] ml-auto pt-[3px] text-xs leading-4 text-white">1:43 PM</span>
    <span className="mr-1 w-px bg-[#8a93a5]" />
  </footer>
);

export default function App() {
  return (
    <div className="flex h-screen flex-col overflow-hidden bg-[#222] font-[Roboto,'Open_Sans',sans-serif]">
      <TitleBar />
      <MenuBar />
      <main className="mb-px flex min-h-0 flex-1">
        <MyBlueprint />
        <div className="mx-[5px] flex min-w-0 flex-1 flex-col">
          <Toolbar />
          <div className="flex h-[27px] shrink-0 pt-[5px] pl-1">
            <DockTab icon={<GraphIcon />} title="Event Graph" />
          </div>
          <GraphCanvas />
        </div>
        <Details />
      </main>
      <TaskBar />
    </div>
  );
}
